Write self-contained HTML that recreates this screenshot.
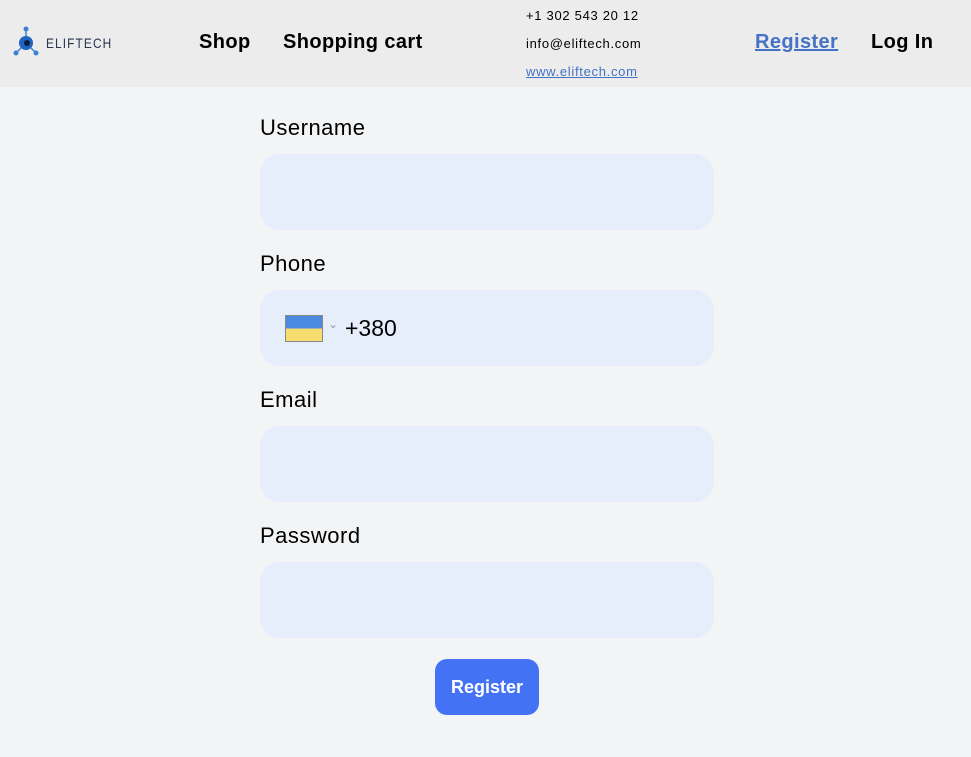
<!DOCTYPE html>
<html><head><style>
body{margin:0;width:971px;height:757px;background:#f3f4f6;font-family:"Liberation Sans",sans-serif;position:relative;overflow:hidden}
header{position:absolute;left:0;top:0;width:971px;height:87px;background:#ececec}
.a{position:absolute;white-space:nowrap}
.nav{font-size:20px;font-weight:bold;color:#000;top:31px;letter-spacing:0.4px}
.ct{font-size:13px;color:#000;left:526px;letter-spacing:0.7px}
label{position:absolute;left:260px;font-size:22px;color:#000;letter-spacing:0.5px}
.in{position:absolute;left:260px;width:454px;height:76px;background:#e7eefb;border-radius:20px}
</style></head><body>
<header>
<svg class="a" style="left:12px;top:26px" width="28" height="32" viewBox="0 0 28 32">
<line x1="14" y1="3" x2="14" y2="10" stroke="#3b82d6" stroke-width="1.5"/>
<line x1="4" y1="27" x2="9" y2="22" stroke="#3b82d6" stroke-width="1.5"/>
<line x1="24" y1="27" x2="19" y2="22" stroke="#3b82d6" stroke-width="1.5"/>
<circle cx="14" cy="3" r="2.5" fill="#3b82d6"/><circle cx="4" cy="27" r="2.5" fill="#3b82d6"/><circle cx="24" cy="27" r="2.5" fill="#3b82d6"/>
<circle cx="14" cy="17" r="7" fill="#1e64c0"/><circle cx="15" cy="17" r="3" fill="#0b1b3a"/>
</svg>
<div class="a" style="left:46px;top:35px;font-size:14px;letter-spacing:1.3px;color:#2a3550;font-family:'Liberation Sans Narrow','Liberation Sans',sans-serif;transform:scaleX(0.85);transform-origin:left">ELIFTECH</div>
<div class="a nav" style="left:199px">Shop</div>
<div class="a nav" style="left:283px">Shopping cart</div>
<div class="a ct" style="top:8px">+1 302 543 20 12</div>
<div class="a ct" style="top:36px">info@eliftech.com</div>
<div class="a ct" style="top:64px;color:#4472c4;text-decoration:underline">www.eliftech.com</div>
<div class="a nav" style="left:755px;color:#4472c4;text-decoration:underline">Register</div>
<div class="a nav" style="left:871px">Log In</div>
</header>
<label style="top:115px">Username</label><div class="in" style="top:154px"></div>
<label style="top:251px">Phone</label><div class="in" style="top:290px">
<div class="a" style="left:25px;top:25px;width:36px;height:25px;border:1px solid #888;background:linear-gradient(#4a8ae0 50%,#f7dc6f 50%)"></div>
<div class="a" style="left:68px;top:27px;font-size:12px;color:#999">⌄</div>
<div class="a" style="left:85px;top:25px;font-size:23px;color:#000">+380</div>
</div>
<label style="top:387px">Email</label><div class="in" style="top:426px"></div>
<label style="top:523px">Password</label><div class="in" style="top:562px"></div>
<div class="a" style="left:435px;top:659px;width:104px;height:56px;border-radius:12px;background:#4472f5;color:#fff;font-weight:bold;font-size:18px;text-align:center;line-height:56px">Register</div>
</body></html>
